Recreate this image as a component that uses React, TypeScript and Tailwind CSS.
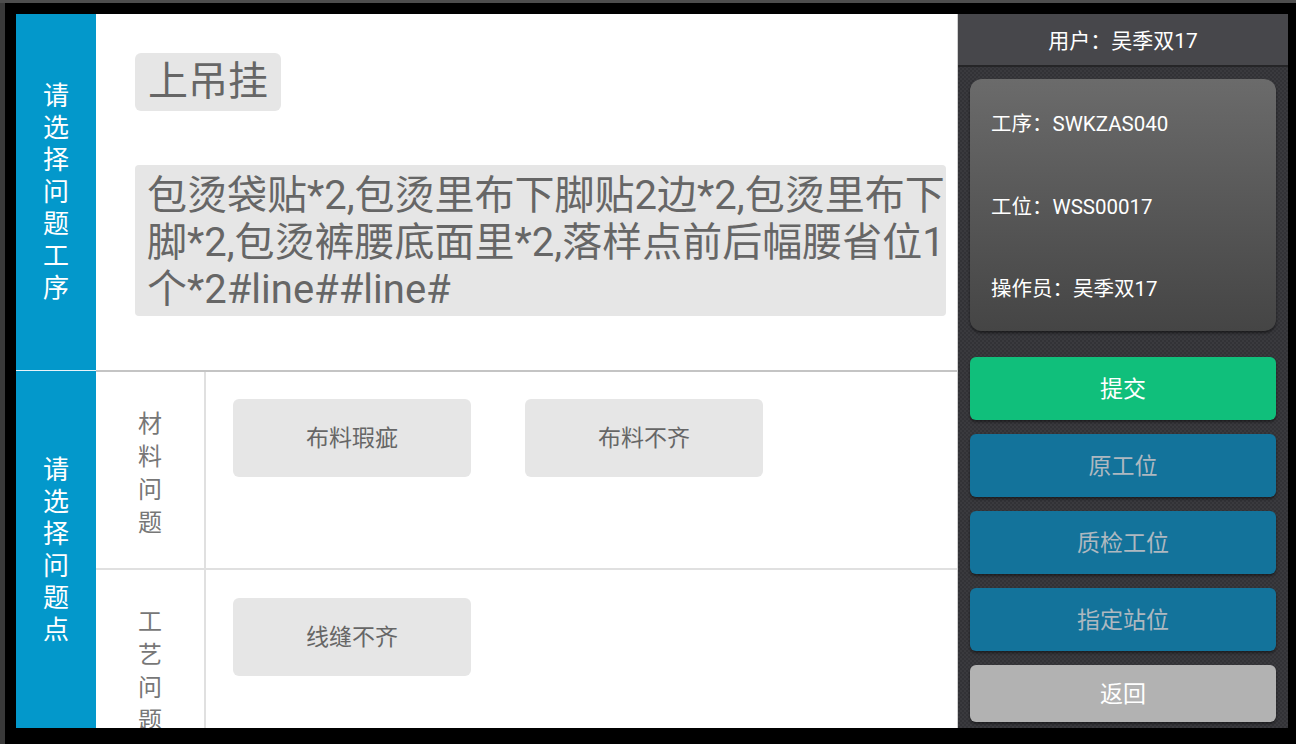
import React from "react";

const font = { fontFamily: 'Roboto, "Noto Sans CJK SC", sans-serif' };

function Vertical({ text, className }: { text: string; className: string }) {
  return (
    <div className={"flex flex-col items-center " + className}>
      {text.split("").map((c, i) => (
        <div key={i}>{c}</div>
      ))}
    </div>
  );
}

function OptionBtn({ label }: { label: string }) {
  return (
    <div className="w-[238px] h-[78px] rounded-[6px] bg-[#e6e6e6] flex items-center justify-center pt-[3px] text-[23px] text-[#666]">
      {label}
    </div>
  );
}

function SideBtn({ label, className }: { label: string; className: string }) {
  return (
    <div
      className={
        "rounded-[6px] flex items-center justify-center pt-[3px] text-[23px] shadow-[0_2px_3px_rgba(0,0,0,0.45)] " +
        className
      }
    >
      {label}
    </div>
  );
}

export default function App() {
  return (
    <div className="w-[1296px] h-[744px] bg-black flex flex-col overflow-hidden" style={font}>
      <div className="h-[3px] bg-[#4e4e4e] shrink-0" />
      <div className="flex flex-1 min-h-0">
        <div className="w-[5px] bg-[#3a3a3a] shrink-0" />
        <div className="flex-1 pt-[11px] pl-[11px] pr-[8px] pb-[16px] flex min-w-0">
          {/* left blue column */}
          <div className="w-[80px] bg-[#0398cb] flex flex-col text-white text-[26px] leading-[32px]">
            <div className="h-[356px] flex items-center justify-center">
              <Vertical text="请选择问题工序" className="" />
            </div>
            <div className="h-[1px] bg-[#e8f4fa]" />
            <div className="flex-1 flex items-center justify-center">
              <Vertical text="请选择问题点" className="" />
            </div>
          </div>

          {/* main white area */}
          <div className="w-[862px] bg-white flex flex-col overflow-hidden border-r-[1px] border-[#d0d0d0]">
            <div className="h-[356px] shrink-0 pl-[39px] pt-[39px] flex flex-col items-start">
              <div className="h-[58px] px-[13px] rounded-[6px] bg-[#e6e6e6] text-[40px] leading-[58px] text-[#666]">
                上吊挂
              </div>
              <div className="mt-[54px] w-[811px] h-[151px] rounded-[4px] bg-[#e6e6e6] pl-[12px] pr-0 pt-[7px] text-[40px] leading-[47px] text-[#666] break-all">
                包烫袋贴*2,包烫里布下脚贴2边*2,包烫里布下脚*2,包烫裤腰底面里*2,落样点前后幅腰省位1个*2#line##line#
              </div>
            </div>
            <div className="h-[2px] bg-[#c4c4c4] shrink-0" />
            <div className="flex h-[196px] shrink-0">
              <div className="w-[110px] border-r-[2px] border-[#e0e0e0] flex items-center justify-center pt-[8px]">
                <Vertical text="材料问题" className="text-[24px] leading-[33px] text-[#777]" />
              </div>
              <div className="flex-1 pl-[27px] pt-[27px] flex items-start gap-[54px]">
                <OptionBtn label="布料瑕疵" />
                <OptionBtn label="布料不齐" />
              </div>
            </div>
            <div className="h-[2px] bg-[#e0e0e0] shrink-0" />
            <div className="flex h-[196px] shrink-0">
              <div className="w-[110px] border-r-[2px] border-[#e0e0e0] flex items-start justify-center pt-[36px]">
                <Vertical text="工艺问题" className="text-[24px] leading-[33px] text-[#777]" />
              </div>
              <div className="flex-1 pl-[27px] pt-[28px] flex items-start gap-[54px]">
                <OptionBtn label="线缝不齐" />
              </div>
            </div>
          </div>

          {/* right panel */}
          <div className="flex-1 flex flex-col bg-[#37373b] bg-[repeating-conic-gradient(#3a3a3e_0_25%,#323236_0_50%)] bg-[length:4px_4px]">
            <div className="h-[53px] shrink-0 bg-[#47474b] border-b-[2px] border-[#252527] flex items-center justify-center pt-[4px] text-white text-[21px]">
              用户：吴季双17
            </div>
            <div className="px-[12px] pt-[12px] flex flex-col">
              <div className="h-[252px] rounded-[12px] bg-gradient-to-b from-[#6b6b6b] to-[#454545] shadow-[0_2px_3px_rgba(0,0,0,0.5)] flex flex-col pl-[21px] pt-[4px] text-white text-[20.5px]">
                <div className="h-[84px] flex items-center">工序：SWKZAS040</div>
                <div className="h-[84px] flex items-center">工位：WSS00017</div>
                <div className="h-[84px] flex items-center">操作员：吴季双17</div>
              </div>
              <div className="mt-[26px] flex flex-col gap-[14px]">
                <SideBtn label="提交" className="h-[63px] bg-[#10bf7b] text-white" />
                <SideBtn label="原工位" className="h-[63px] bg-[#13739b] text-[#aeb8c0]" />
                <SideBtn label="质检工位" className="h-[63px] bg-[#13739b] text-[#aeb8c0]" />
                <SideBtn label="指定站位" className="h-[63px] bg-[#13739b] text-[#aeb8c0]" />
                <SideBtn label="返回" className="h-[57px] bg-[#b2b2b2] text-white" />
              </div>
            </div>
          </div>
        </div>
      </div>
    </div>
  );
}
